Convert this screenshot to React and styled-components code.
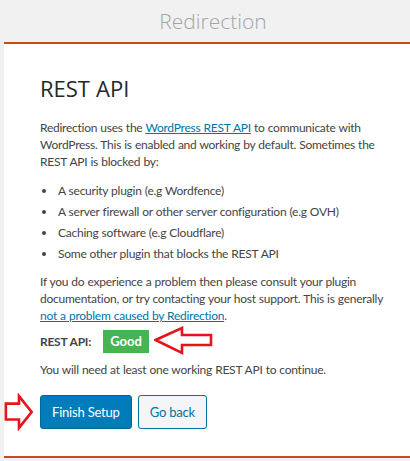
import React from "react";
import styled, { createGlobalStyle } from "styled-components";

const GlobalStyle = createGlobalStyle`
  body {
    margin: 0;
    background: #f1f1f1;
    font-family: Lato, "Open Sans", sans-serif;
    color: #444;
  }
`;

const Page = styled.div`
  padding-left: 4px;
  height: 461px;
  overflow: hidden;
`;

const Header = styled.div`
  height: 42px;
  display: flex;
  align-items: center;
  justify-content: center;
  padding-left: 12px;
  font-family: "Open Sans", sans-serif;
  font-size: 21px;
  font-weight: 300;
  color: #a0a5aa;
`;

const Panel = styled.div`
  background: #fff;
  border-top: 2px solid #c9491b;
  border-bottom: 2px solid #c9491b;
  height: 416px;
  padding: 30px 18px 0 36px;
  box-sizing: border-box;
  font-size: 12px;
  letter-spacing: -0.25px;
  word-spacing: 0.3px;
`;

const Title = styled.h1`
  margin: 0 0 15px;
  font-family: "Open Sans", sans-serif;
  font-size: 22px;
  font-weight: 400;
  letter-spacing: 0;
  color: #23282d;
  line-height: 1.35;
`;

const Text = styled.p`
  margin: 0 0 ${(p) => p.$gap || 10}px;
  line-height: 17px;
`;

const Link = styled.a`
  color: #0073aa;
  text-decoration: underline;
`;

const List = styled.ul`
  margin: 0 0 9px;
  padding-left: 17px;
  line-height: 21px;
  li {
    padding-left: 1px;
  }
`;

const StatusRow = styled.div`
  display: flex;
  align-items: center;
  height: 27px;
  margin-bottom: 6px;
`;

const Label = styled.span`
  font-weight: 700;
  color: #444;
  width: 63px;
`;

const Badge = styled.span`
  background: #46b450;
  color: #fff;
  font-weight: 700;
  font-size: 13px;
  letter-spacing: 0;
  width: 46px;
  height: 23px;
  display: flex;
  align-items: center;
  justify-content: center;
`;

const Pointer = styled.svg`
  display: block;
  flex: none;
`;

const Actions = styled.div`
  display: flex;
  align-items: center;
  gap: 6px;
  margin-top: 15px;
  margin-left: -36px;
`;

const Button = styled.button`
  height: 34px;
  padding: 0 11px;
  border-radius: 3px;
  font-family: inherit;
  font-size: 13px;
  letter-spacing: -0.2px;
  border: 1px solid ${(p) => (p.$primary ? "#006799" : "#0071a1")};
  background: ${(p) => (p.$primary ? "#007cba" : "#f3f5f6")};
  color: ${(p) => (p.$primary ? "#fff" : "#0071a1")};
  cursor: pointer;
`;

const LeftArrow = () => (
  <Pointer width="60" height="30" viewBox="0 0 60 30" style={{ marginLeft: 5 }}>
    <path
      d="M1.5 14 L28 2 L28 9 L57 9 L57 19 L28 19 L28 27 Z"
      fill="#fff"
      stroke="#e8141b"
      strokeWidth="2.6"
      strokeLinejoin="miter"
    />
  </Pointer>
);

const RightArrow = () => (
  <Pointer width="30" height="38" viewBox="0 0 32 38">
    <path
      d="M2 10 L16 10 L16 2 L29.5 19 L16 36 L16 27 L2 27 Z"
      fill="#fff"
      stroke="#e8141b"
      strokeWidth="2.8"
    />
  </Pointer>
);

export default function App() {
  return (
    <>
      <GlobalStyle />
      <Page>
        <Header>Redirection</Header>
        <Panel>
          <Title>REST API</Title>
          <Text $gap={10}>
            Redirection uses the <Link href="#">WordPress REST API</Link> to
            communicate with WordPress. This is enabled and working by default.
            Sometimes the REST API is blocked by:
          </Text>
          <List>
            <li>A security plugin (e.g Wordfence)</li>
            <li>A server firewall or other server configuration (e.g OVH)</li>
            <li>Caching software (e.g Cloudflare)</li>
            <li>Some other plugin that blocks the REST API</li>
          </List>
          <Text $gap={4}>
            If you do experience a problem then please consult your plugin
            documentation, or try contacting your host support. This is
            generally <Link href="#">not a problem caused by Redirection</Link>.
          </Text>
          <StatusRow>
            <Label>REST API:</Label>
            <Badge>Good</Badge>
            <LeftArrow />
          </StatusRow>
          <Text>You will need at least one working REST API to continue.</Text>
          <Actions>
            <RightArrow />
            <Button $primary>Finish Setup</Button>
            <Button>Go back</Button>
          </Actions>
        </Panel>
      </Page>
    </>
  );
}
